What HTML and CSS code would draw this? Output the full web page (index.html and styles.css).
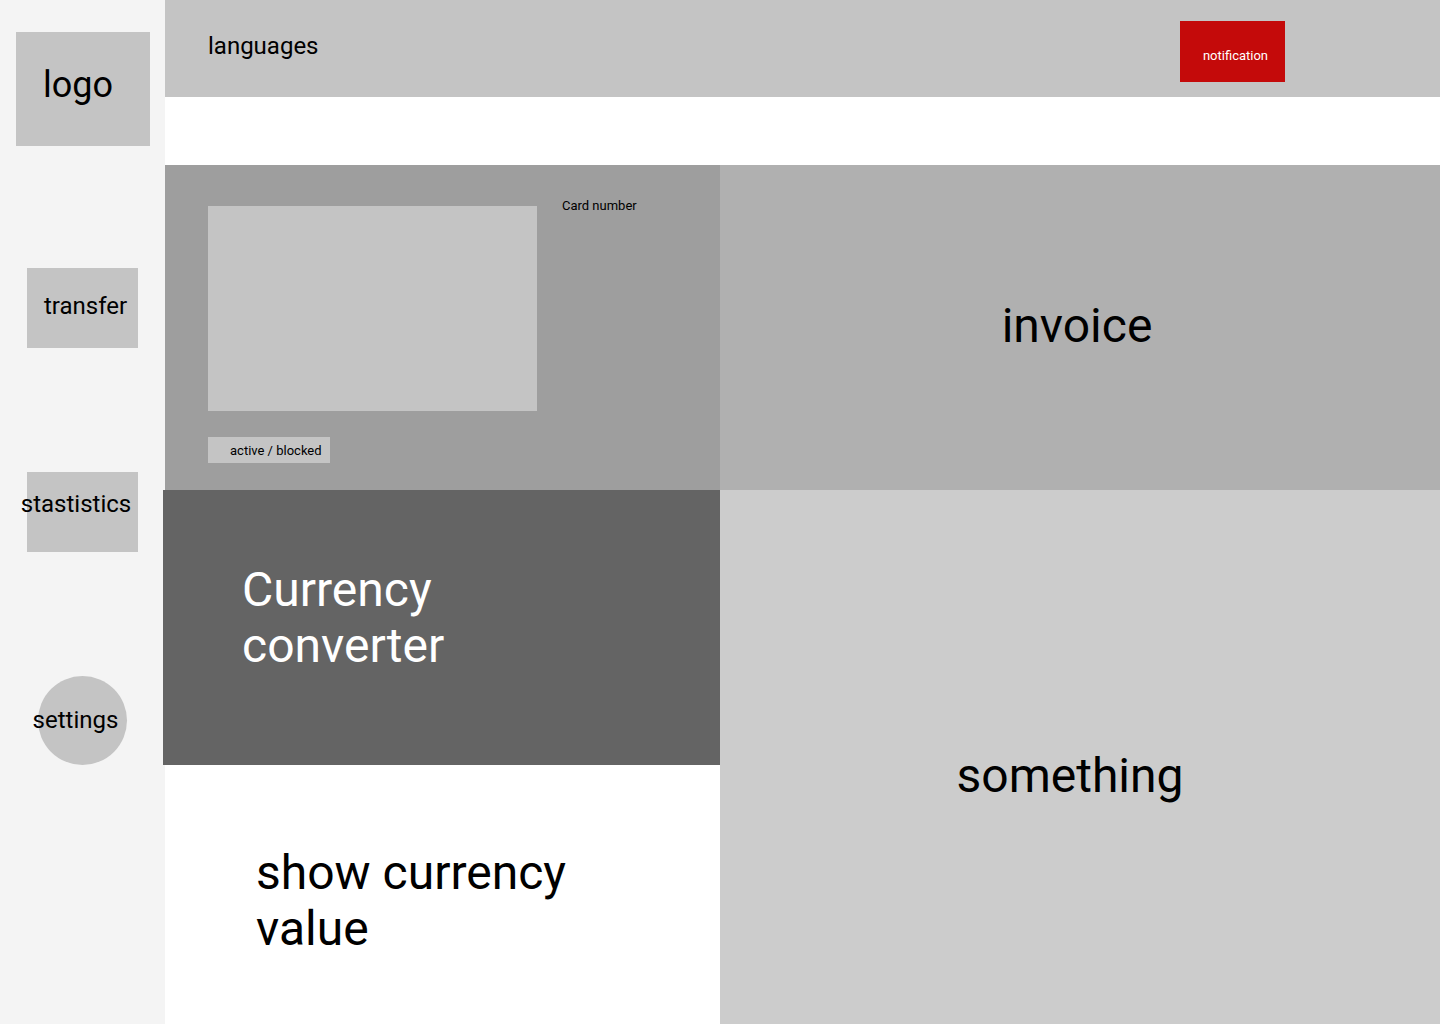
FILE: index.html
```html
<!DOCTYPE html>
<html lang="en">
<head>
<meta charset="utf-8">
<title>Dashboard wireframe</title>
<link rel="stylesheet" href="styles.css">
</head>
<body>
<div class="app">
  <aside class="sidebar">
    <div class="logo"><span>logo</span></div>
    <div class="nav-box nav-transfer"><span class="label label-transfer">transfer</span></div>
    <div class="nav-box nav-stats"><span class="label label-stats">stastistics</span></div>
    <div class="nav-circle"><span class="label label-settings">settings</span></div>
  </aside>
  <main class="main">
    <header class="topbar">
      <div class="languages">languages</div>
      <div class="notification"><span>notification</span></div>
    </header>
    <section class="grid">
      <div class="cell card-cell">
        <div class="card-left">
          <div class="card-image"></div>
          <div class="status"><span>active / blocked</span></div>
        </div>
        <div class="card-number">Card number</div>
      </div>
      <div class="cell invoice"><span>invoice</span></div>
      <div class="cell converter"><span>Currency<br>converter</span></div>
      <div class="cell something"><span>something</span></div>
      <div class="cell currency-value"><span>show currency<br>value</span></div>
    </section>
  </main>
</div>
</body>
</html>
```

FILE: styles.css
```css
* { box-sizing: border-box; }

html, body {
  margin: 0;
  padding: 0;
  background: #ffffff;
}

body {
  font-family: Roboto, "Liberation Sans", Arial, sans-serif;
  color: #000000;
}

.app {
  display: grid;
  grid-template-columns: 165px 1fr;
  width: 1440px;
  height: 1024px;
  overflow: hidden;
}

/* Sidebar */
.sidebar {
  background: #f4f4f4;
  display: flex;
  flex-direction: column;
  align-items: center;
  padding-top: 32px;
}

.logo {
  width: 134px;
  height: 114px;
  background: #c4c4c4;
  display: flex;
  align-items: center;
  padding-left: 27px;
  padding-bottom: 8px;
  font-size: 36px;
  margin-left: 1px;
}

.nav-box {
  width: 111px;
  height: 80px;
  background: #c4c4c4;
  display: flex;
  align-items: center;
  justify-content: center;
  font-size: 24px;
  white-space: nowrap;
}

.nav-transfer {
  margin-top: 122px;
  padding-bottom: 4px;
}

.nav-stats {
  margin-top: 124px;
  padding-bottom: 17px;
}

.nav-circle {
  width: 89px;
  height: 89px;
  border-radius: 50%;
  background: #c4c4c4;
  margin-top: 124px;
  display: flex;
  align-items: center;
  justify-content: center;
  font-size: 24px;
  white-space: nowrap;
  padding-bottom: 2px;
}

.label { display: block; flex: none; }
.label-transfer { margin-left: 6px; }
.label-stats { margin-right: 13px; }
.label-settings { margin-right: 14px; }

/* Main */
.main {
  display: flex;
  flex-direction: column;
  min-width: 0;
}

.topbar {
  height: 97px;
  background: #c4c4c4;
  display: flex;
  justify-content: space-between;
  align-items: flex-start;
  padding: 0 155px 0 43px;
  flex: none;
}

.languages {
  font-size: 24px;
  line-height: 28px;
  margin-top: 32px;
}

.notification {
  width: 105px;
  height: 61px;
  margin-top: 21px;
  background: #c40a0a;
  color: #ffffff;
  font-size: 13px;
  display: flex;
  align-items: center;
  justify-content: center;
  padding-left: 6px;
  padding-top: 8px;
}

.grid {
  margin-top: 68px;
  flex: 1;
  display: grid;
  grid-template-columns: 555px 720px;
  grid-template-rows: 325px 275px 259px;
}

.cell { min-width: 0; }

/* Card */
.card-cell {
  grid-column: 1;
  grid-row: 1;
  background: #9e9e9e;
  display: flex;
  align-items: flex-start;
  padding: 41px 0 0 43px;
}

.card-left {
  display: flex;
  flex-direction: column;
  align-items: flex-start;
}

.card-image {
  width: 329px;
  height: 205px;
  background: #c4c4c4;
}

.status {
  margin-top: 26px;
  width: 122px;
  height: 26px;
  background: #c4c4c4;
  font-size: 13px;
  display: flex;
  align-items: center;
  padding-left: 22px;
}

.card-number {
  font-size: 13px;
  line-height: 15px;
  margin-left: 25px;
  margin-top: -8px;
}

/* Invoice */
.invoice {
  grid-column: 2;
  grid-row: 1;
  background: #b0b0b0;
  display: flex;
  align-items: center;
  justify-content: center;
  font-size: 48px;
  padding-right: 6px;
  padding-bottom: 4px;
}

/* Converter */
.converter {
  grid-column: 1;
  grid-row: 2;
  margin-left: -2px;
  background: #646464;
  color: #ffffff;
  font-size: 48px;
  line-height: 56px;
  padding: 72px 0 0 79px;
}

/* Something */
.something {
  grid-column: 2;
  grid-row: 2 / span 2;
  background: #cccccc;
  display: flex;
  align-items: center;
  justify-content: center;
  font-size: 48px;
  padding-top: 36px;
  padding-right: 20px;
}

/* Currency value */
.currency-value {
  grid-column: 1;
  grid-row: 3;
  background: #ffffff;
  font-size: 48px;
  line-height: 56px;
  padding: 80px 0 0 91px;
}
```
